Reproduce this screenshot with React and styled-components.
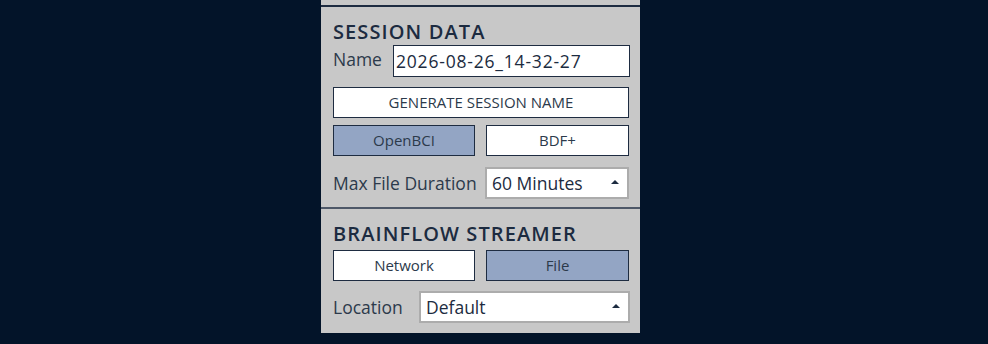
import React from "react";
import styled, { createGlobalStyle } from "styled-components";

const GlobalStyle = createGlobalStyle`
  html, body {
    margin: 0;
    padding: 0;
    background: #031429;
  }
  body {
    font-family: "Open Sans", "DejaVu Sans", sans-serif;
  }
`;

const Page = styled.div`
  width: 988px;
  height: 344px;
  padding-left: 321px;
  box-sizing: border-box;
  overflow: hidden;
`;

const Panel = styled.div`
  width: 319px;
  height: 333px;
  background: #c8c8c8;
  box-sizing: border-box;
  padding-top: 5px;
`;

const Rule = styled.div`
  height: 2px;
  background: #1e2c41;
`;

const Section = styled.div`
  padding: 0 10px 0 12px;
  display: flex;
  flex-direction: column;
`;

const Title = styled.div`
  font-family: "Open Sans", sans-serif;
  font-weight: 600;
  font-size: 20px;
  line-height: 24px;
  color: #1c2b40;
  margin-top: ${(p) => p.$top}px;
  letter-spacing: 1.1px;
`;

const Row = styled.div`
  display: flex;
  align-items: center;
  margin-top: ${(p) => p.$top}px;
  gap: ${(p) => p.$gap || 0}px;
`;

const Label = styled.div`
  width: ${(p) => p.$w}px;
  flex: none;
  font-size: 17.5px;
  color: #2c3a4b;
  margin-top: ${(p) => p.$nudge || 0}px;
`;

const TextInput = styled.div`
  width: 237px;
  height: 32px;
  box-sizing: border-box;
  background: #fff;
  border: 1px solid #1e2c41;
  font-size: 17.5px;
  line-height: 30px;
  padding-left: 2px;
  color: #1c2b40;
  letter-spacing: 0.8px;
`;

const Button = styled.div`
  width: ${(p) => p.$w}px;
  height: 31px;
  box-sizing: border-box;
  border: 1px solid #1e2c41;
  background: ${(p) => (p.$active ? "#93a5c4" : "#ffffff")};
  color: #2c3a4b;
  font-size: 15px;
  display: flex;
  align-items: center;
  justify-content: center;
  padding-bottom: 1px;
`;

const Select = styled.div`
  width: ${(p) => p.$w}px;
  height: 32px;
  box-sizing: border-box;
  background: #fff;
  border: 2px solid #acacac;
  font-size: 17.5px;
  color: #1c2b40;
  display: flex;
  align-items: center;
  justify-content: space-between;
  padding: 0 8px 0 5px;
`;

const Caret = styled.span`
  width: 0;
  height: 0;
  border-left: 4px solid transparent;
  border-right: 4px solid transparent;
  border-bottom: 4px solid #1c2b40;
  margin-bottom: 2px;
`;

const Divider = styled.div`
  height: 2px;
  background: #4e5868;
  margin-top: 8px;
`;

export default function App() {
  return (
    <Page>
      <GlobalStyle />
      <Panel>
        <Rule />
        <Section>
          <Title $top={13}>SESSION DATA</Title>
          <Row $top={1}>
            <Label $w={60} $nudge={-4}>Name</Label>
            <TextInput>2026-08-26_14-32-27</TextInput>
          </Row>
          <Row $top={10}>
            <Button $w={296}>GENERATE SESSION NAME</Button>
          </Row>
          <Row $top={7} $gap={11}>
            <Button $w={142} $active>OpenBCI</Button>
            <Button $w={143}>BDF+</Button>
          </Row>
          <Row $top={11}>
            <Label $w={152}>Max File Duration</Label>
            <Select $w={144}>
              60 Minutes
              <Caret />
            </Select>
          </Row>
        </Section>
        <Divider />
        <Section>
          <Title $top={13}>BRAINFLOW STREAMER</Title>
          <Row $top={4} $gap={11}>
            <Button $w={142}>Network</Button>
            <Button $w={143} $active>File</Button>
          </Row>
          <Row $top={10}>
            <Label $w={86}>Location</Label>
            <Select $w={211}>
              Default
              <Caret />
            </Select>
          </Row>
        </Section>
      </Panel>
    </Page>
  );
}
